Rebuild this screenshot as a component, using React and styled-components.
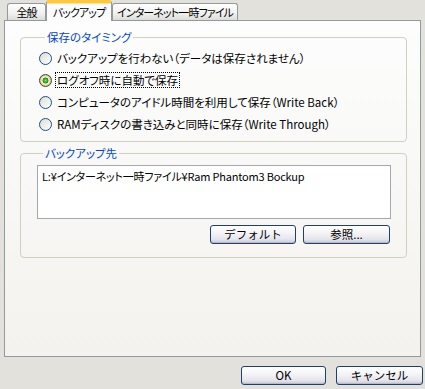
import React from 'react';
import styled, { createGlobalStyle } from 'styled-components';

const GlobalStyle = createGlobalStyle`
  html, body { margin: 0; padding: 0; background: #e2e1dc; }
  body {
    font-family: "Noto Sans CJK JP", "Noto Sans", sans-serif;
    font-size: 11px;
    color: #000;
    font-feature-settings: "palt";
  }
`;

const Dialog = styled.div`
  width: 425px;
  height: 389px;
  display: flex;
  flex-direction: column;
  background: #e2e1dc;
`;

const TabStrip = styled.div`
  display: flex;
  align-items: flex-end;
  height: 21px;
  padding-left: 7px;
  margin-bottom: -1px;
  position: relative;
  z-index: 1;
`;

const Tab = styled.div`
  box-sizing: border-box;
  width: ${p => p.$w}px;
  height: ${p => (p.$active ? 21 : 17)}px;
  margin-bottom: ${p => (p.$active ? 0 : 1)}px;
  border: 1px solid #919b9c;
  border-bottom: none;
  border-radius: 3px 3px 0 0;
  background: ${p => (p.$active ? '#fcfcfe' : 'linear-gradient(#ffffff, #f0f0ee 60%, #dcdcd8)')};
  border-top: ${p => (p.$active ? '3px solid #ffc83c' : '1px solid #919b9c')};
  box-shadow: ${p => (p.$active ? 'inset 0 1px 0 #fce3a2' : 'none')};
  display: flex;
  align-items: center;
  justify-content: center;
  font-size: 11px;
  letter-spacing: -0.9px;
  line-height: 1;
  white-space: nowrap;
`;

const Panel = styled.div`
  margin: 0 4px;
  height: 337px;
  box-sizing: border-box;
  border: 1px solid #919b9c;
  background: linear-gradient(#fdfdfd, #f3f2ee);
  padding: 9px 13px 0 15px;
  display: flex;
  flex-direction: column;
  gap: 4px;
`;

const Group = styled.fieldset`
  margin: 0;
  min-width: 0;
  height: 112px;
  box-sizing: border-box;
  border: 1px solid #d0d0bf;
  border-radius: 4px;
  padding: ${p => p.$pad};
  display: flex;
  flex-direction: column;
`;

const Legend = styled.legend`
  color: #0046d5;
  padding: 0 2px;
  margin-left: 6px;
  line-height: 14px;
  font-size: 11.5px;
`;

const RadioRow = styled.div`
  height: 22px;
  display: flex;
  align-items: center;
  gap: 3px;
  white-space: nowrap;
`;

const RadioCircle = styled.span`
  flex: none;
  width: 13px;
  height: 13px;
  box-sizing: border-box;
  border-radius: 50%;
  border: 1px solid #1c5180;
  background: ${p =>
    p.$checked
      ? 'radial-gradient(circle, #7fe07a 0, #21a121 2.2px, #2a9a2a 2.8px, #ffffff 3.3px, #fbe6ae 4px, #f3b54a 5.5px)'
      : 'linear-gradient(135deg, #dcdcd7, #ffffff)'};
`;

const RadioLabel = styled.span`
  padding: 0 1px;
  font-size: 11.5px;
  line-height: 14px;
  border: 1px dotted ${p => (p.$focus ? '#000' : 'transparent')};
`;

const PathBox = styled.div`
  height: 54px;
  box-sizing: border-box;
  border: 1px solid #a2a8ad;
  background: #fff;
  padding: 3px 4px;
  line-height: 14px;
  white-space: nowrap;
  letter-spacing: -0.2px;
`;

const ButtonRow = styled.div`
  display: flex;
  justify-content: flex-end;
  gap: ${p => p.$gap}px;
  margin-top: ${p => p.$top}px;
  padding-right: ${p => p.$right}px;
`;

const Button = styled.button`
  width: ${p => p.$w}px;
  height: 19px;
  box-sizing: border-box;
  padding: 0;
  border: 1px solid #213f6a;
  border-radius: 3px;
  background: linear-gradient(#ffffff, #f3f3f6 45%, #e3e3ea 80%, #c8c8d6);
  box-shadow: inset 0 -1px 0 #b9b9c9;
  font-family: inherit;
  font-size: 11.5px;
  line-height: 1;
  color: #000;
`;

const Footer = styled(ButtonRow)``;

const options = [
  'バックアップを行わない（データは保存されません）',
  'ログオフ時に自動で保存',
  'コンピュータのアイドル時間を利用して保存（Write Back）',
  'RAMディスクの書き込みと同時に保存（Write Through）',
];

export default function App() {
  const selected = 1;
  return (
    <Dialog>
      <GlobalStyle />
      <TabStrip>
        <Tab $w={39}>全般</Tab>
        <Tab $w={66} $active>バックアップ</Tab>
        <Tab $w={126}>インターネット一時ファイル</Tab>
      </TabStrip>
      <Panel>
        <Group $pad="3px 0 6px 18px">
          <Legend>保存のタイミング</Legend>
          {options.map((text, i) => (
            <RadioRow key={text}>
              <RadioCircle $checked={i === selected} />
              <RadioLabel $focus={i === selected}>{text}</RadioLabel>
            </RadioRow>
          ))}
        </Group>
        <Group $pad="5px 15px 0 16px">
          <Legend>バックアップ先</Legend>
          <PathBox>L:¥インターネット一時ファイル¥Ram Phantom3 Bockup</PathBox>
          <ButtonRow $gap={7} $top={6} $right={1}>
            <Button $w={86}>デフォルト</Button>
            <Button $w={87}>参照...</Button>
          </ButtonRow>
        </Group>
      </Panel>
      <Footer $gap={10} $top={9} $right={2}>
        <Button $w={85}>OK</Button>
        <Button $w={87}>キャンセル</Button>
      </Footer>
    </Dialog>
  );
}
